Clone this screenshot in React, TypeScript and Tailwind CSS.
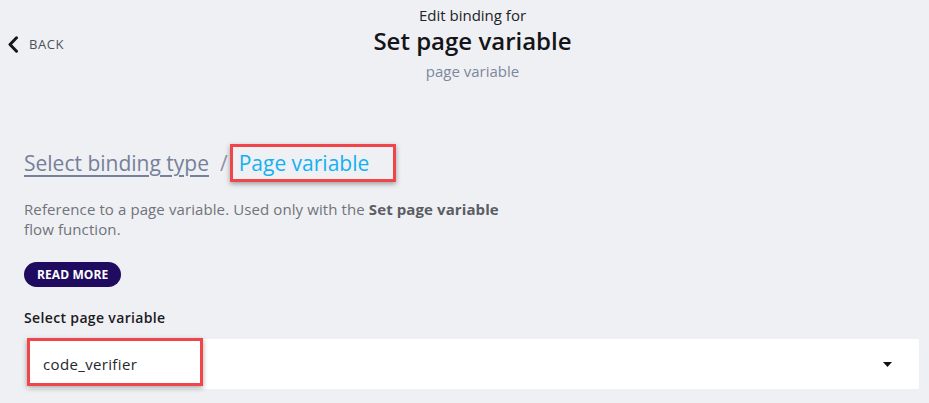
import React from "react";

export default function App() {
  return (
    <div
      className="w-full h-[403px] bg-[#eff0f3] overflow-hidden text-[#1d1e22]"
      style={{ fontFamily: '"Open Sans", "Noto Sans", sans-serif' }}
    >
      {/* Header */}
      <div className="grid grid-cols-[1fr_auto_1fr] pl-[16px] pt-[5px]">
        <div className="-ml-[16px] pl-[7px] pt-[29px]">
          <button className="flex items-center gap-[10px] text-[#4b5061]">
            <svg width="12" height="17" viewBox="0 0 12 17" className="text-[#15161a]">
              <polyline
                points="9.5,1.8 3,8.5 9.5,15.2"
                fill="none"
                stroke="currentColor"
                strokeWidth="3"
                strokeLinecap="round"
                strokeLinejoin="round"
              />
            </svg>
            <span className="text-[13px] leading-[20px] tracking-[0.6px]">BACK</span>
          </button>
        </div>
        <div className="flex flex-col items-center">
          <div className="text-[15px] leading-[20px] text-[#222328]">Edit binding for</div>
          <div className="text-[24px] leading-[32px] font-semibold text-[#141519]">
            Set page variable
          </div>
          <div className="mt-[4px] text-[15px] leading-[20px] text-[#7d879e]">page variable</div>
        </div>
        <div />
      </div>

      {/* Content */}
      <div className="pl-[24px] pr-[10px]">
        <div className="mt-[63px] flex items-center h-[38px]">
          <span className="text-[21px] leading-[32px] text-[#76809a] underline decoration-[1.5px] underline-offset-[4px]">
            Select binding type
          </span>
          <span className="ml-[11px] text-[21px] leading-[32px] text-[#8d93a3]">/</span>
          <span className="ml-[2px] h-[38px] flex items-center border-[3px] border-[#f0454b] pl-[6px] pr-[24px] shadow-[0_2px_5px_rgba(0,0,0,0.35)]">
            <span className="text-[21px] leading-[32px] text-[#14b0f2]">Page variable</span>
          </span>
        </div>

        <p className="mt-[17px] text-[15px] leading-[20px] tracking-[0.1px] text-[#70737c] w-[490px]">
          Reference to a page variable. Used only with the{" "}
          <span className="font-bold text-[#5b5d64]">Set page variable</span> flow function.
        </p>

        <button className="mt-[23px] h-[25px] px-[13px] rounded-full bg-[#1f0b5f] text-white text-[12px] font-bold leading-[25px] tracking-[0.1px]">
          READ MORE
        </button>

        <div className="mt-[21px] text-[14px] leading-[20px] font-semibold tracking-[0.35px] text-[#1a1b1f]">
          Select page variable
        </div>

        <div className="relative mt-[11px] ml-[3px] h-[50px] bg-white flex items-center justify-between pl-[16px] pr-[27px]">
          <span className="text-[15px] leading-[20px] tracking-[0.35px] text-[#26272b]">code_verifier</span>
          <svg width="9" height="5" viewBox="0 0 9 5">
            <polygon points="0,0 9,0 4.5,5" fill="#111" />
          </svg>
          <div className="absolute left-0 top-[-1px] w-[176px] h-[48px] border-[3px] border-[#f0454b] shadow-[0_2px_5px_rgba(0,0,0,0.35)] pointer-events-none" />
        </div>
      </div>
    </div>
  );
}
